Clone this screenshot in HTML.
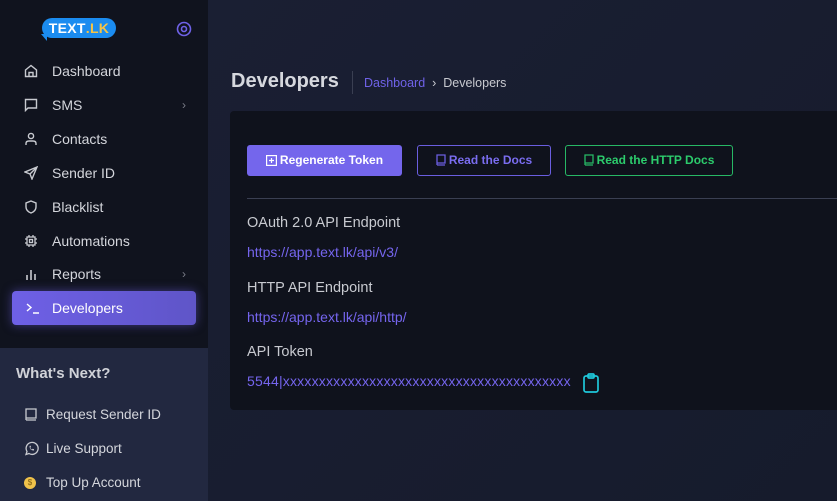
<!DOCTYPE html>
<html><head><meta charset="utf-8"><style>
*{margin:0;padding:0;box-sizing:border-box}
body{width:837px;height:501px;overflow:hidden;font-family:"Liberation Sans",sans-serif;background:#181d30;position:relative;color:#d0d2d8}
.side{position:absolute;left:0;top:0;width:208px;height:348px;background:#10131e}
.next{position:absolute;left:0;top:348px;width:208px;height:153px;background:#222840}
.main{position:absolute;left:208px;top:0;right:0;bottom:0;background:linear-gradient(135deg,#1a1f33,#161b2c)}
.logo{position:absolute;left:42px;top:18px;width:74px;height:20px;background:#1b8cf0;border-radius:10px;color:#fff;font-weight:bold;font-size:14px;line-height:20px;text-align:center;letter-spacing:.3px}
.logo b{color:#f6c445}
.logo:after{content:"";position:absolute;left:-1px;bottom:-3px;border-top:7px solid #1b8cf0;border-left:6px solid transparent}
.item{position:absolute;left:0;width:208px;height:34px;font-size:14px;color:#d4d6dc;line-height:34px;padding-left:52px}
.item svg{position:absolute;left:24px;top:10px}
.chev{position:absolute;left:182px;color:#7a7d88;font-size:12px}
.act{left:12px;width:184px;padding-left:40px;background:linear-gradient(90deg,#6e60e6,#5f55c8);border-radius:4px;color:#fff;box-shadow:0 0 10px rgba(110,96,230,.5)}
.nx{position:absolute;left:46px;font-size:13.5px;color:#d4d6dc}
.nx svg,.nx span.c{position:absolute;left:-22px;top:0}
h1{position:absolute;left:231px;top:70px;font-size:20px;font-weight:bold;color:#d6d8de}
.sep{position:absolute;left:352px;top:71px;width:1px;height:23px;background:#3a3f52}
.bc{position:absolute;left:364px;top:76px;font-size:12.5px;color:#c8cad0}
.bc a{color:#6f62e8}
.card{position:absolute;left:230px;top:111px;width:620px;height:299px;background:#0f121c;border-radius:4px}
.btn{position:absolute;top:145px;height:31px;border-radius:3px;font-size:12px;font-weight:bold;line-height:29px;text-align:center}
.btn svg{vertical-align:-2px;margin-right:3px}
.hr{position:absolute;left:247px;top:198px;width:590px;height:1px;background:#3a3f52}
.lbl{position:absolute;left:247px;font-size:14.5px;color:#c8cad0}
.lnk{position:absolute;left:247px;font-size:14px;color:#7565ee}
</style></head><body>
<div class="side"></div><div class="next"></div><div class="main"></div>
<div class="logo">TEXT<b>.LK</b></div>
<svg style="position:absolute;left:176px;top:21px" width="16" height="16" viewBox="0 0 16 16" fill="none" stroke="#6f62e8" stroke-width="1.6"><circle cx="8" cy="8" r="6.5"/><circle cx="8" cy="8" r="2.5"/></svg>
<div class="item" style="top:54px"><svg width="14" height="14" viewBox="0 0 14 14" fill="none" stroke="#c8cad0" stroke-width="1.4"><path d="M1.5 6L7 1.5 12.5 6V12.5H1.5Z M5 12.5V8.5H9V12.5"/></svg>Dashboard</div>
<div class="item" style="top:88px"><svg width="14" height="14" viewBox="0 0 14 14" fill="none" stroke="#c8cad0" stroke-width="1.4"><path d="M1.5 1.5H12.5V10H4L1.5 12.5Z"/></svg>SMS<span class="chev">›</span></div>
<div class="item" style="top:122px"><svg width="14" height="14" viewBox="0 0 14 14" fill="none" stroke="#c8cad0" stroke-width="1.4"><circle cx="7" cy="4" r="2.6"/><path d="M2 13V11.5Q2 9 5 9H9Q12 9 12 11.5V13"/></svg>Contacts</div>
<div class="item" style="top:156px"><svg width="14" height="14" viewBox="0 0 14 14" fill="none" stroke="#c8cad0" stroke-width="1.4"><path d="M13 1L1 6 6 8 8 13Z M13 1L6 8"/></svg>Sender ID</div>
<div class="item" style="top:190px"><svg width="14" height="14" viewBox="0 0 14 14" fill="none" stroke="#c8cad0" stroke-width="1.4"><path d="M7 1L12 3V7Q12 11 7 13 2 11 2 7V3Z"/></svg>Blacklist</div>
<div class="item" style="top:224px"><svg width="14" height="14" viewBox="0 0 14 14" fill="none" stroke="#c8cad0" stroke-width="1.3"><rect x="3" y="3" width="8" height="8"/><rect x="5.5" y="5.5" width="3" height="3"/><path d="M5 1V3M9 1V3M5 11V13M9 11V13M1 5H3M1 9H3M11 5H13M11 9H13"/></svg>Automations</div>
<div class="item" style="top:257px"><svg width="14" height="14" viewBox="0 0 14 14" fill="none" stroke="#c8cad0" stroke-width="1.6"><path d="M3 13V8M7 13V3M11 13V7"/></svg>Reports<span class="chev">›</span></div>
<div class="item act" style="top:291px"><svg width="14" height="14" viewBox="0 0 14 14" fill="none" stroke="#fff" stroke-width="1.4" style="left:14px"><path d="M1 3L5 6.5 1 10M7 12H13"/></svg>Developers</div>
<div style="position:absolute;left:16px;top:365px;font-size:15px;font-weight:bold;color:#d0d2d8">What's Next?</div>
<div class="nx" style="top:407px"><svg width="14" height="15" viewBox="0 0 14 15" fill="none" stroke="#c8cad0" stroke-width="1.3"><path d="M2 13V2H12V11H2M2 13H12"/></svg>Request Sender ID</div>
<div class="nx" style="top:441px"><svg width="15" height="15" viewBox="0 0 15 15" fill="none" stroke="#c8cad0" stroke-width="1.3"><path d="M2 13.5L3 10.5A6 6 0 1 1 5 12.5Z"/><path d="M5.5 5Q5.5 9.5 10 9.5L10 8.3 8.7 7.8 8 8.5Q6.5 8 6.3 6.5L7 6 6.6 4.6Z" fill="#c8cad0" stroke="none"/></svg>Live Support</div>
<div class="nx" style="top:475px"><span class="c" style="top:2px;width:12px;height:12px;border-radius:50%;background:#f0c24a;color:#7a5a10;font-size:8px;text-align:center;line-height:12px">$</span>Top Up Account</div>
<h1>Developers</h1><div class="sep"></div>
<div class="bc"><a>Dashboard</a> &nbsp;›&nbsp; Developers</div>
<div class="card"></div>
<div class="btn" style="left:247px;width:155px;background:#7466ec;color:#fff;line-height:31px"><svg width="11" height="11" viewBox="0 0 11 11" fill="none" stroke="#fff" stroke-width="1.2"><rect x=".6" y=".6" width="9.8" height="9.8"/><path d="M5.5 3V8M3 5.5H8"/></svg>Regenerate Token</div>
<div class="btn" style="left:417px;width:134px;border:1px solid #6a5ee0;color:#7a6df0"><svg width="10" height="12" viewBox="0 0 10 12" fill="none" stroke="#6a5ee0" stroke-width="1.3"><path d="M1 11V1H9V9H1M1 11H9"/></svg>Read the Docs</div>
<div class="btn" style="left:565px;width:168px;border:1px solid #27b865;color:#2ccb6c"><svg width="10" height="12" viewBox="0 0 10 12" fill="none" stroke="#27b865" stroke-width="1.3"><path d="M1 11V1H9V9H1M1 11H9"/></svg>Read the HTTP Docs</div>
<div class="hr"></div>
<div class="lbl" style="top:215px">OAuth 2.0 API Endpoint</div>
<div class="lnk" style="top:244px">https://app.text.lk/api/v3/</div>
<div class="lbl" style="top:280px">HTTP API Endpoint</div>
<div class="lnk" style="top:309px">https://app.text.lk/api/http/</div>
<div class="lbl" style="top:344px">API Token</div>
<div class="lnk" style="top:373px;letter-spacing:0.2px">5544|xxxxxxxxxxxxxxxxxxxxxxxxxxxxxxxxxxxxxxxx</div>
<svg style="position:absolute;left:582px;top:373px" width="18" height="20" viewBox="0 0 18 20" fill="none" stroke="#1fc7d9" stroke-width="1.7"><rect x="2" y="3" width="14" height="16" rx="2"/><rect x="6" y="1" width="6" height="4" rx="1"/></svg>
</body></html>
